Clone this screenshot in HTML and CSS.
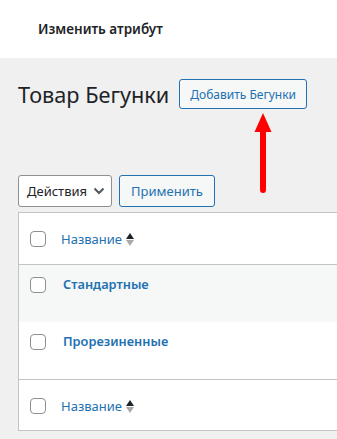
FILE: index.html
```html
<html>
<head>
    <link rel="stylesheet" href="styles.css">
</head>
<body>
<div class="topbar">Изменить атрибут</div>
<div class="wrap">
    <div class="head">
        <h1>Товар Бегунки</h1>
        <a class="btn" href="#">Добавить Бегунки</a>
        <div class="arrow">
            <svg width="18" height="80" viewBox="0 0 18 80">
                <polygon points="9,0 17.5,19 0.5,19" fill="#ff0000"/>
                <line x1="9" y1="17" x2="9" y2="77" stroke="#ff0000" stroke-width="6" stroke-linecap="round"/>
            </svg>
        </div>
    </div>
    <div class="tablenav">
        <div class="select">Действия
            <svg width="12" height="8" viewBox="0 0 12 8"><polyline points="1.5,1.5 6,6 10.5,1.5" fill="none" stroke="#50575e" stroke-width="2"/></svg>
        </div>
        <a class="btn small" href="#">Применить</a>
    </div>
    <div class="table">
        <div class="row thead">
            <span class="cb"></span>
            <a class="sort" href="#">Название <span class="arrows"><i class="up"></i><i class="down"></i></span></a>
        </div>
        <div class="row alt">
            <span class="cb"></span>
            <a class="name" href="#">Стандартные</a>
        </div>
        <div class="row">
            <span class="cb"></span>
            <a class="name" href="#">Прорезиненные</a>
        </div>
        <div class="row tfoot">
            <span class="cb"></span>
            <a class="sort" href="#">Название <span class="arrows"><i class="up"></i><i class="down"></i></span></a>
        </div>
    </div>
</div>
</body>
</html>
```

FILE: styles.css
```css
body {
    margin: 0;
    background: #f0f0f1;
    font-family: "Noto Sans", "Open Sans", sans-serif;
    color: #1d2327;
}
a {
    text-decoration: none;
}
.topbar {
    background: #fff;
    height: 58px;
    display: flex;
    align-items: center;
    padding-left: 38px;
    font-size: 13.5px;
    font-weight: 600;
}
.wrap {
    padding-left: 18px;
}
.head {
    display: flex;
    align-items: center;
    gap: 10px;
    margin-top: 21px;
    position: relative;
}
.head h1 {
    margin: 0;
    font-size: 21.7px;
    font-weight: 400;
    line-height: 29px;
}
.btn {
    display: inline-flex;
    align-items: center;
    height: 28px;
    padding: 0 10px;
    border: 1px solid #2271b1;
    border-radius: 3px;
    background: #f6f7f7;
    color: #2271b1;
    font-size: 12px;
}
.arrow {
    position: absolute;
    left: 236px;
    top: 34px;
}
.arrow svg {
    display: block;
}
.tablenav {
    display: flex;
    gap: 7px;
    margin-top: 66px;
    align-items: flex-start;
}
.select {
    box-sizing: border-box;
    width: 94px;
    height: 32px;
    border: 1px solid #8c8f94;
    border-radius: 3px;
    background: #fff;
    display: flex;
    align-items: center;
    justify-content: space-between;
    padding: 0 6px 0 8px;
    font-size: 13px;
}
.btn.small {
    height: 30px;
    padding: 0 11px;
    font-size: 13px;
}
.table {
    margin-top: 5px;
    background: #fff;
    border: 1px solid #c3c4c7;
    border-right: none;
}
.row {
    display: flex;
    align-items: flex-start;
    height: 57px;
    box-sizing: border-box;
    padding-top: 12px;
    padding-left: 11px;
}
.row.alt {
    background: #f6f7f7;
}
.row.thead {
    height: 52px;
    padding-top: 18px;
    border-bottom: 1px solid #c3c4c7;
}
.row.tfoot {
    height: 51px;
    padding-top: 18px;
    border-top: 1px solid #c3c4c7;
}
.cb {
    box-sizing: border-box;
    width: 16px;
    height: 16px;
    border: 1px solid #8c8f94;
    border-radius: 4px;
    background: #fff;
    flex: none;
}
.sort {
    margin-left: 15px;
    color: #2271b1;
    font-size: 13px;
    line-height: 17px;
    display: flex;
    align-items: center;
    gap: 4px;
}
.arrows {
    display: inline-flex;
    flex-direction: column;
    gap: 1px;
}
.arrows i {
    width: 0;
    height: 0;
    border-left: 4px solid transparent;
    border-right: 4px solid transparent;
}
.arrows .up {
    border-bottom: 6px solid #1d2327;
}
.arrows .down {
    border-top: 6px solid #a7aaad;
}
.name {
    margin-left: 17px;
    color: #2271b1;
    font-weight: 600;
    font-size: 12.8px;
    line-height: 14px;
}
```
